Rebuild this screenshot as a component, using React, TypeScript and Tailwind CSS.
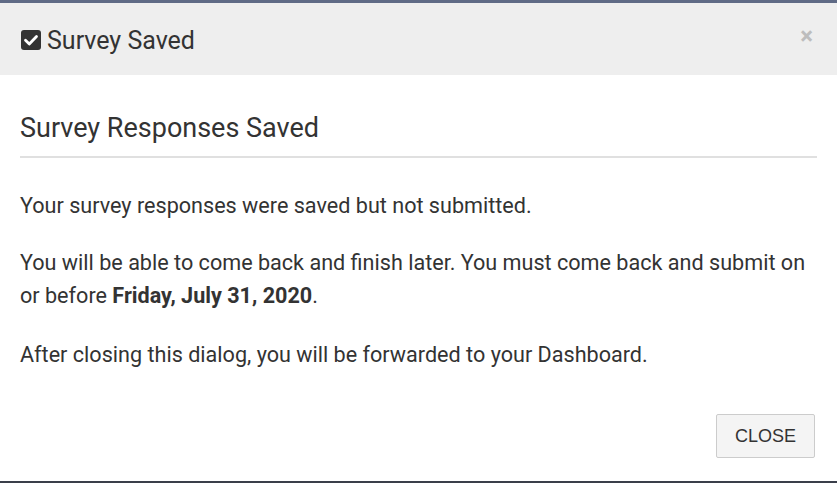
export default function App() {
  return (
    <div className="flex h-[483px] w-[837px] flex-col overflow-hidden bg-[#3a3f4a] font-['Roboto',sans-serif]">
      <div className="h-[3px] shrink-0 bg-[#5f6a85]" />
      <div className="flex h-[478px] shrink-0 flex-col bg-white">
        <div className="flex h-[72px] shrink-0 items-center justify-between bg-[#eeeeee] pl-[21px] pr-[24px]">
          <div className="mt-[3px] flex items-center gap-[6px] text-[25px] text-[#333]">
            <svg width="20" height="20" viewBox="0 0 20 20" className="mb-[1px]">
              <rect x="0" y="0" width="20" height="20" rx="3" fill="#333" />
              <path d="M4.5 10.3 L8.3 14 L15.5 6.5" stroke="#fff" strokeWidth="2.8" fill="none" strokeLinecap="round" strokeLinejoin="round" />
            </svg>
            <span>Survey Saved</span>
          </div>
          <span className="mb-[7px] text-[24px] font-bold leading-none text-[#bdbdbd]">×</span>
        </div>
        <div className="flex flex-1 flex-col px-[20px] pt-[37px] text-[#333]">
          <h2 className="border-b-2 border-[#e0e0e0] pb-[12px] text-[27px] leading-[32px]">Survey Responses Saved</h2>
          <div className="mt-[31px] text-[21.6px] leading-[33px]">
            <p>Your survey responses were saved but not submitted.</p>
            <p className="mt-[24px]">
              You will be able to come back and finish later. You must come back and submit on or before{' '}
              <b>Friday, July 31, 2020</b>.
            </p>
            <p className="mt-[26px]">After closing this dialog, you will be forwarded to your Dashboard.</p>
          </div>
          <div className="mt-auto mb-[23px] flex justify-end pr-[2px]">
            <button className="h-[44px] w-[99px] rounded-[2px] border border-[#cccccc] bg-[#f4f4f4] font-['Liberation_Sans',sans-serif] text-[18px] text-[#333]">
              CLOSE
            </button>
          </div>
        </div>
      </div>
    </div>
  );
}
